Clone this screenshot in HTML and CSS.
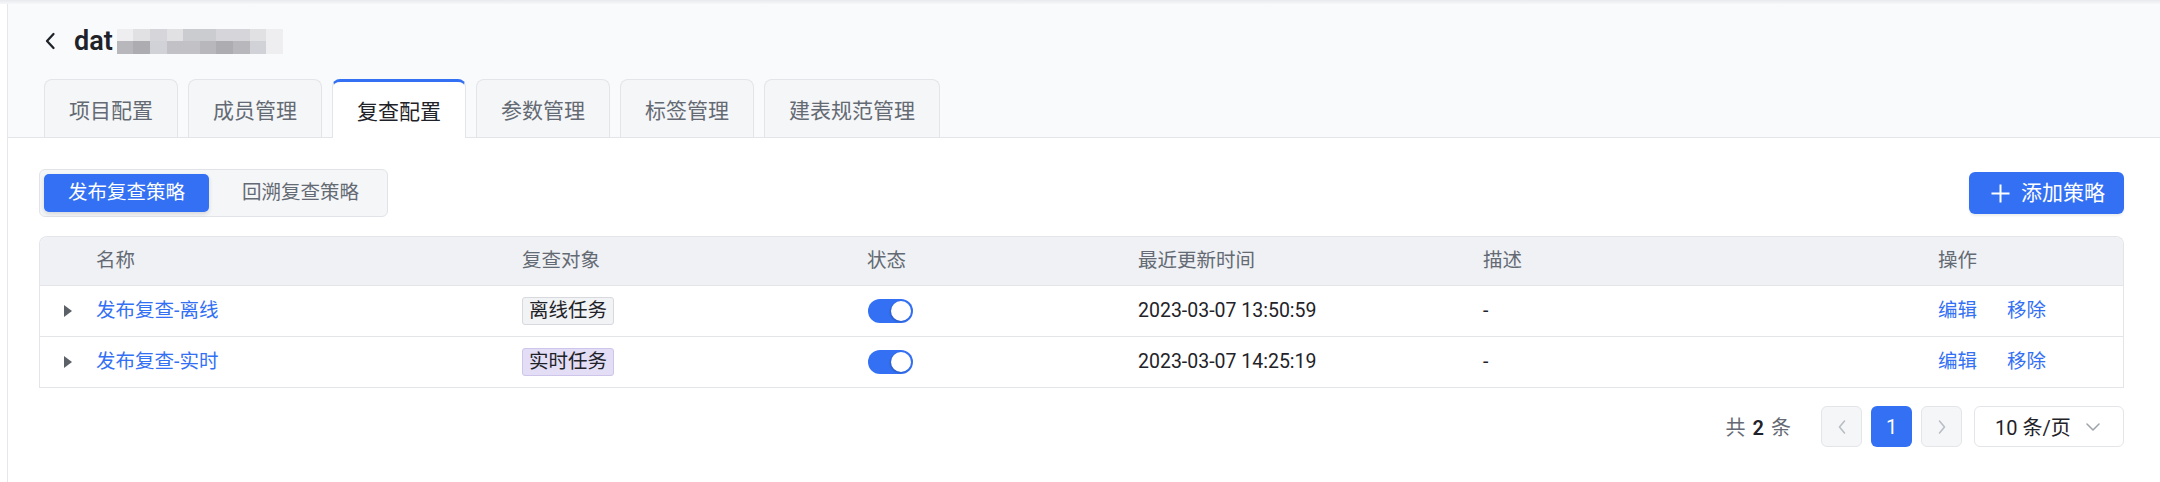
FILE: index.html
```html
<!DOCTYPE html>
<html lang="zh-CN">
<head>
<meta charset="utf-8">
<title>复查配置</title>
<link rel="stylesheet" href="styles.css">
</head>
<body>
<div class="topshade"></div>
<div class="page">
  <header class="header">
    <div class="title">
      <svg class="back" width="12" height="18" viewBox="0 0 12 18"><path d="M9.5 2 L3 9 L9.5 16" fill="none" stroke="#1f2329" stroke-width="2.3" stroke-linecap="round" stroke-linejoin="round"/></svg>
      <span class="title-text">dat</span>
      <span class="mosaic">
        <i class="g1"></i><i class="g2"></i><i class="g3"></i><i class="g2"></i><i class="g4"></i><i class="g4"></i><i class="g3"></i><i class="g3"></i><i class="g2"></i><i class="g1"></i>
        <i class="d2"></i><i class="d1"></i><i class="d4"></i><i class="d3"></i><i class="d3"></i><i class="d2"></i><i class="d1"></i><i class="d2"></i><i class="d4"></i><i class="g1"></i>
      </span>
    </div>
    <nav class="tabs">
      <div class="tab">项目配置</div>
      <div class="tab">成员管理</div>
      <div class="tab tab-active">复查配置</div>
      <div class="tab">参数管理</div>
      <div class="tab">标签管理</div>
      <div class="tab">建表规范管理</div>
    </nav>
  </header>

  <main class="content">
    <div class="toolbar">
      <div class="segmented">
        <div class="seg seg-active">发布复查策略</div>
        <div class="seg">回溯复查策略</div>
      </div>
      <button class="btn-primary">
        <svg width="19" height="19" viewBox="0 0 19 19"><path d="M9.5 0.5 V18.5 M0.5 9.5 H18.5" stroke="#fff" stroke-width="2" fill="none"/></svg>
        <span>添加策略</span>
      </button>
    </div>

    <div class="table">
      <div class="row head">
        <div class="cell"></div>
        <div class="cell">名称</div>
        <div class="cell">复查对象</div>
        <div class="cell">状态</div>
        <div class="cell">最近更新时间</div>
        <div class="cell">描述</div>
        <div class="cell">操作</div>
      </div>
      <div class="row">
        <div class="cell expand"><span class="caret"></span></div>
        <div class="cell"><a class="link">发布复查-离线</a></div>
        <div class="cell"><span class="tag">离线任务</span></div>
        <div class="cell"><span class="switch"><span class="knob"></span></span></div>
        <div class="cell">2023-03-07 13:50:59</div>
        <div class="cell">-</div>
        <div class="cell ops"><a class="link">编辑</a><a class="link">移除</a></div>
      </div>
      <div class="row">
        <div class="cell expand"><span class="caret"></span></div>
        <div class="cell"><a class="link">发布复查-实时</a></div>
        <div class="cell"><span class="tag tag-purple">实时任务</span></div>
        <div class="cell"><span class="switch"><span class="knob"></span></span></div>
        <div class="cell">2023-03-07 14:25:19</div>
        <div class="cell">-</div>
        <div class="cell ops"><a class="link">编辑</a><a class="link">移除</a></div>
      </div>
    </div>

    <div class="pager">
      <span class="total">共<b>2</b>条</span>
      <span class="pbtn pbtn-nav"><svg width="10" height="16" viewBox="0 0 10 16"><path d="M7.5 2 L2.5 8 L7.5 14" fill="none" stroke="#b9bdc4" stroke-width="1.6" stroke-linecap="round" stroke-linejoin="round"/></svg></span>
      <span class="pbtn pbtn-active">1</span>
      <span class="pbtn pbtn-nav pbtn-last"><svg width="10" height="16" viewBox="0 0 10 16"><path d="M2.5 2 L7.5 8 L2.5 14" fill="none" stroke="#b9bdc4" stroke-width="1.6" stroke-linecap="round" stroke-linejoin="round"/></svg></span>
      <span class="psize"><span>10 条/页</span><svg width="14" height="8" viewBox="0 0 14 8"><path d="M1 1 L7 7 L13 1" fill="none" stroke="#9ea3aa" stroke-width="1.5" stroke-linecap="round" stroke-linejoin="round"/></svg></span>
    </div>
  </main>
</div>
</body>
</html>
```

FILE: styles.css
```css
* { box-sizing: border-box; }

html, body {
  margin: 0;
  padding: 0;
  background: #ffffff;
}

body {
  width: 2160px;
  height: 482px;
  overflow: hidden;
  font-family: "Roboto", "Noto Sans CJK SC", sans-serif;
  font-size: 19.5px;
  color: #1f2329;
}

.topshade {
  height: 4px;
  background: linear-gradient(#e9eaed, #f6f7f9);
}

.page {
  margin-left: 7px;
  border-left: 1px solid #e6e7ea;
  height: 478px;
}

/* ---------- header ---------- */
.header {
  background: #f9fafb;
  padding: 20px 0 0 36px;
  border-bottom: 1px solid #e3e5e9;
}

.title {
  height: 34px;
  display: flex;
  align-items: center;
}

.back {
  display: block;
  margin-right: 18px;
}

.title-text {
  font-size: 27px;
  font-weight: 600;
  line-height: 34px;
  color: #1f2329;
}

.mosaic {
  display: grid;
  grid-template-columns: repeat(10, 16.6px);
  grid-template-rows: 12px 13px;
  margin-left: 4px;
  filter: blur(0.6px);
}

.mosaic i { display: block; }
.g1 { background: #eeeef0; }
.g2 { background: #e1e1e4; }
.g3 { background: #d6d6da; }
.g4 { background: #cbccd0; }
.d1 { background: #acacb1; }
.d2 { background: #b8b8bc; }
.d3 { background: #c2c2c6; }
.d4 { background: #d0d2d7; }

.tabs {
  display: flex;
  gap: 10px;
  margin-top: 21px;
}

.tab {
  height: 58px;
  padding: 5px 24px 0;
  display: flex;
  align-items: center;
  font-size: 21px;
  line-height: 28px;
  color: #646a73;
  background: #f5f6f8;
  border: 1px solid #e3e5e9;
  border-bottom: none;
  border-radius: 8px 8px 0 0;
}

.tab-active {
  background: #ffffff;
  color: #1f2329;
  border-top: 3px solid #3370f4;
  padding-top: 3px;
  height: 59px;
  margin-bottom: -1px;
}

/* ---------- content ---------- */
.content {
  padding: 31px 36px 0 31px;
}

.toolbar {
  display: flex;
  align-items: center;
  justify-content: space-between;
  height: 48px;
}

.segmented {
  display: flex;
  gap: 9px;
  padding: 4px;
  background: #f5f6f8;
  border: 1px solid #e1e3e8;
  border-radius: 6px;
}

.seg {
  height: 38px;
  padding: 0 24px;
  display: flex;
  align-items: center;
  line-height: 26px;
  color: #646a73;
  border-radius: 5px;
}

.seg-active {
  background: #3370f4;
  color: #ffffff;
  box-shadow: 0 2px 4px rgba(31, 35, 41, 0.14);
}

.btn-primary {
  height: 42px;
  padding: 0 19px 0 22px;
  display: flex;
  align-items: center;
  gap: 11px;
  border: none;
  border-radius: 6px;
  background: #3370f4;
  color: #ffffff;
  font-family: inherit;
  font-size: 21px;
  line-height: 28px;
  box-shadow: 0 2px 2px rgba(31, 35, 41, 0.08);
}

.btn-primary svg { display: block; }

/* ---------- table ---------- */
.table {
  margin-top: 19px;
  border: 1px solid #e3e5e9;
  border-bottom: none;
  border-radius: 8px 8px 0 0;
  overflow: hidden;
}

.row {
  display: grid;
  grid-template-columns: 40px 426px 345px 271px 345px 455px 1fr;
  height: 51px;
  border-bottom: 1px solid #e3e5e9;
  align-items: center;
}

.row.head {
  height: 49px;
  background: #eff1f5;
  color: #646a73;
}

.cell {
  padding-left: 16px;
  line-height: 26px;
  display: flex;
  align-items: center;
  white-space: nowrap;
}

.expand {
  padding-left: 24px;
}

.caret {
  width: 0;
  height: 0;
  border-left: 8px solid #5c6168;
  border-top: 6px solid transparent;
  border-bottom: 6px solid transparent;
}

.link {
  color: #3370f4;
  text-decoration: none;
}

.ops .link + .link { margin-left: 30px; }

.tag {
  display: inline-block;
  height: 28px;
  line-height: 26px;
  padding: 0 6px;
  border: 1px solid #d7d9de;
  background: #f2f3f5;
  border-radius: 3px;
  color: #1f2329;
  font-size: 19.5px;
}

.tag-purple {
  background: #e3def6;
  border-color: #cdc6ea;
}

.switch {
  width: 45px;
  height: 24px;
  margin-left: 1px;
  border-radius: 12px;
  background: #3370f4;
  display: flex;
  align-items: center;
  justify-content: flex-end;
  padding-right: 2px;
}

.knob {
  width: 20px;
  height: 20px;
  border-radius: 50%;
  background: #ffffff;
  box-shadow: -1px 1px 2px rgba(0, 0, 0, 0.2);
}

/* ---------- pager ---------- */
.pager {
  margin-top: 18px;
  height: 41px;
  display: flex;
  justify-content: flex-end;
  align-items: center;
}

.total {
  color: #646a73;
  font-size: 20px;
  margin-right: 30px;
}

.total b {
  color: #1f2329;
  font-weight: 600;
  margin: 0 7px;
}

.pbtn {
  width: 41px;
  height: 41px;
  border-radius: 6px;
  display: flex;
  align-items: center;
  justify-content: center;
  margin-right: 9px;
}

.pbtn-last { margin-right: 12px; }

.pbtn-nav {
  background: #f5f6f8;
  border: 1px solid #e3e5e9;
}

.pbtn-active {
  background: #3370f4;
  color: #ffffff;
  font-size: 20px;
}

.psize {
  width: 150px;
  height: 41px;
  border: 1px solid #e3e5e9;
  border-radius: 6px;
  background: #ffffff;
  display: flex;
  align-items: center;
  justify-content: space-between;
  padding: 0 23px 0 20px;
  font-size: 20px;
  color: #1f2329;
}

.psize svg { display: block; }
```
